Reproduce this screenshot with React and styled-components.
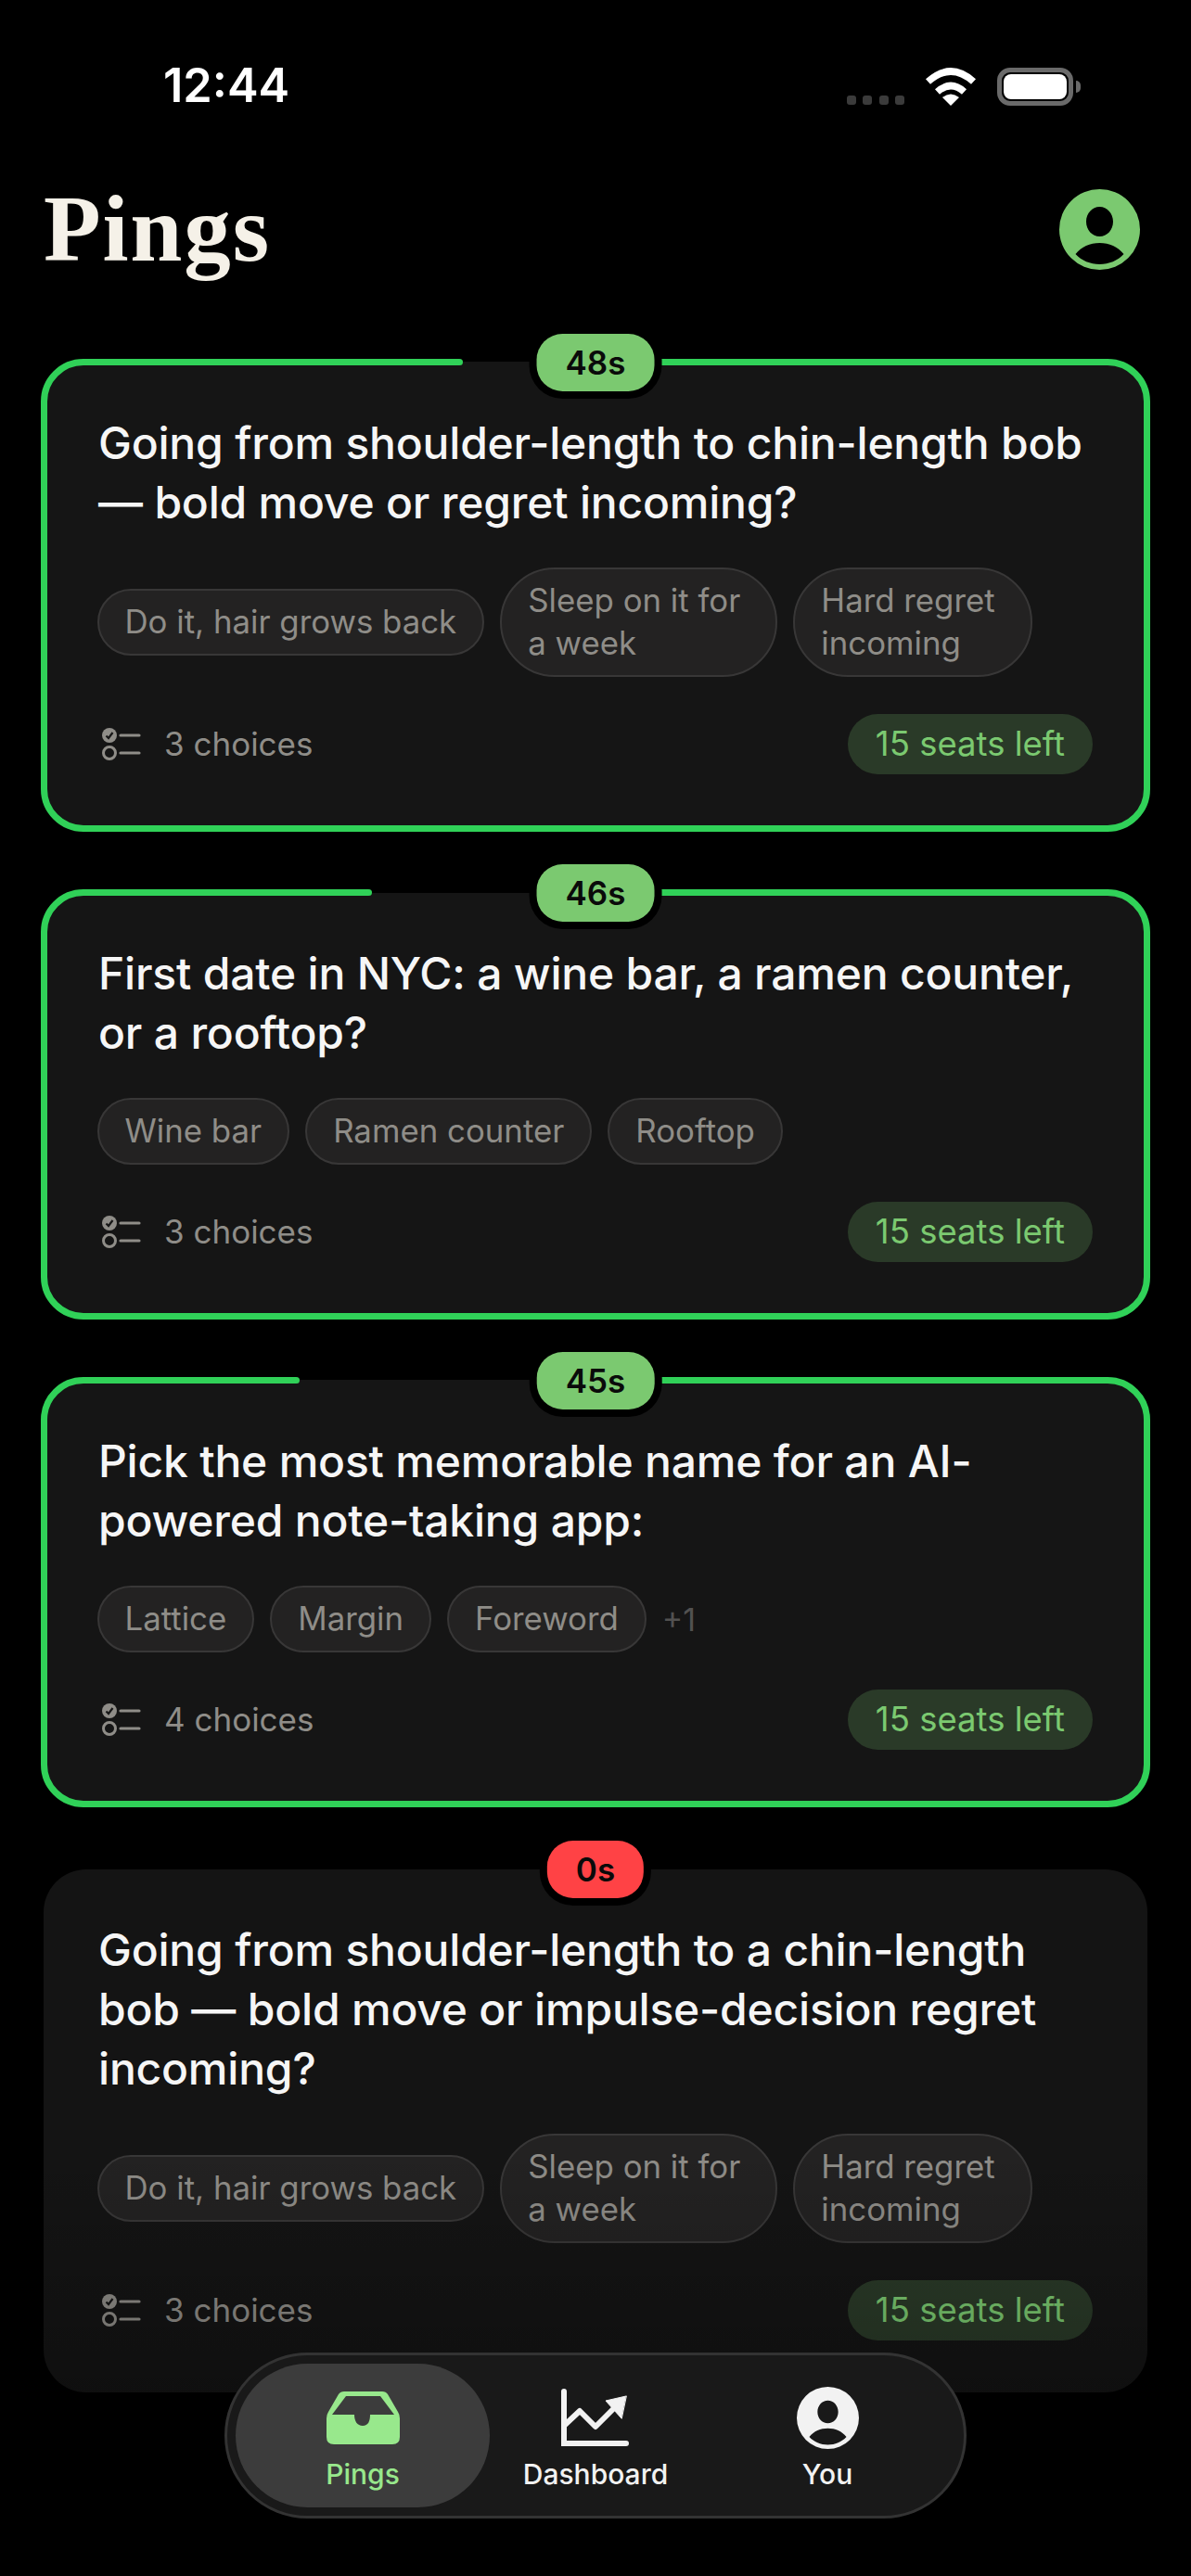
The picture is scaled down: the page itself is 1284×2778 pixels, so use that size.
import React from 'react';
import styled, { createGlobalStyle } from 'styled-components';

const GlobalStyle = createGlobalStyle`
  html, body {
    margin: 0;
    background: #000;
  }
  body {
    font-family: Inter, "Noto Sans", sans-serif;
  }
`;

const pings = [
  {
    id: 1,
    timer: '48s',
    gapLeft: 444,
    title: 'Going from shoulder-length to chin-length bob — bold move or regret incoming?',
    chips: [['Do it, hair grows back'], ['Sleep on it for', 'a week'], ['Hard regret', 'incoming']],
    choices: 3,
  },
  {
    id: 2,
    timer: '46s',
    gapLeft: 346,
    title: 'First date in NYC: a wine bar, a ramen counter, or a rooftop?',
    chips: [['Wine bar'], ['Ramen counter'], ['Rooftop']],
    choices: 3,
  },
  {
    id: 3,
    timer: '45s',
    gapLeft: 268,
    title: 'Pick the most memorable name for an AI-powered note-taking app:',
    chips: [['Lattice'], ['Margin'], ['Foreword']],
    more: '+1',
    choices: 4,
  },
  {
    id: 4,
    timer: '0s',
    expired: true,
    title: 'Going from shoulder-length to a chin-length bob — bold move or impulse-decision regret incoming?',
    chips: [['Do it, hair grows back'], ['Sleep on it for', 'a week'], ['Hard regret', 'incoming']],
    choices: 3,
  },
];

const Page = styled.div`
  position: relative;
  width: 1284px;
  height: 2778px;
  overflow: hidden;
  background: #000;
`;

const StatusBar = styled.div`
  display: flex;
  justify-content: space-between;
  align-items: flex-end;
  height: 41px;
  padding: 73px 119px 0 176px;
`;

const Time = styled.div`
  color: #fff;
  font-size: 50.5px;
  font-weight: 600;
  line-height: 44px;
`;

const StatusIcons = styled.div`
  display: flex;
  align-items: flex-end;
  gap: 22px;
`;

const SignalDots = styled.div`
  display: flex;
  gap: 7.5px;
  padding-bottom: 1px;
`;

const SignalDot = styled.span`
  width: 10px;
  height: 10px;
  border-radius: 3px;
  background: #3b3b3b;
`;

const Battery = styled.div`
  position: relative;
  box-sizing: border-box;
  width: 82px;
  height: 41px;
  margin-right: 8px;
  padding: 2px;
  border: 5px solid #6a6a6a;
  border-radius: 14px;

  &::before {
    content: '';
    display: block;
    height: 100%;
    border-radius: 8px;
    background: #fff;
  }

  &::after {
    content: '';
    position: absolute;
    top: 9px;
    right: -13px;
    width: 5px;
    height: 13px;
    border-radius: 0 5px 5px 0;
    background: #6a6a6a;
  }
`;

const Header = styled.header`
  display: flex;
  justify-content: space-between;
  align-items: center;
  height: 87px;
  padding: 90px 55px 96px 47px;
`;

const PageTitle = styled.h1`
  margin: 0;
  color: #f5f1e8;
  font-family: "Liberation Serif", serif;
  font-size: 101px;
  font-weight: 700;
  letter-spacing: 1.8px;
  line-height: 87px;
`;

const Avatar = styled.div`
  height: 87px;
  color: #7bc970;
`;

const List = styled.main`
  display: flex;
  flex-direction: column;
  gap: 62px;
  padding: 0 44px;
`;

const Card = styled.article`
  position: relative;
  border-radius: 46px;
  ${(p) => p.$expired
    ? 'margin: 5px 3px 0; padding: 55px 59px 56px; background: #141414;'
    : 'border: 7px solid #30d158; padding: 52px 55px 55px; background: #151515;'}
`;

const RingGap = styled.span`
  position: absolute;
  top: -7px;
  left: ${(p) => p.$left}px;
  right: 50%;
  height: 7px;
  background: linear-gradient(#000 50%, #151515 50%);

  &::before {
    content: '';
    position: absolute;
    top: 0;
    left: -3.5px;
    width: 7px;
    height: 7px;
    border-radius: 50%;
    background: #30d158;
  }
`;

const Timer = styled.span`
  position: absolute;
  top: ${(p) => (p.$expired ? -31 : -34)}px;
  left: 50%;
  transform: translateX(-50%);
  padding: 0 31px;
  border-radius: 28px;
  background: ${(p) => (p.$expired ? '#ff4245' : '#7bc970')};
  box-shadow: 0 0 0 8px #000;
  color: #0a0a0a;
  font-size: 35px;
  font-weight: 600;
  line-height: 62px;
`;

const Question = styled.h2`
  margin: 0;
  color: #f6f6f6;
  font-size: 48px;
  font-weight: 500;
  letter-spacing: -0.2px;
  line-height: 64px;
`;

const Chips = styled.div`
  display: flex;
  align-items: center;
  gap: 17px;
  margin: 38px 0 40px -1.5px;
`;

const Chip = styled.span`
  box-sizing: border-box;
  padding: 10px ${(p) => (p.$wrapped ? 38 : 28)}px 12px 28px;
  border: 2px solid #383737;
  border-radius: 60px;
  background: #232222;
  color: #8f8d88;
  font-size: 34.8px;
  line-height: 46px;
  white-space: nowrap;
`;

const MoreCount = styled.span`
  color: #525150;
  font-size: 34px;
`;

const Footer = styled.div`
  display: flex;
  justify-content: space-between;
  align-items: center;
`;

const ChoiceCount = styled.div`
  display: flex;
  align-items: center;
  gap: 25px;
  padding: 0 0 2px 2px;
  color: #8f8d88;
  font-size: 35px;
`;

const Seats = styled.span`
  padding: 0 30px;
  border-radius: 33px;
  background: #2a3a28;
  color: #7bc970;
  font-size: 36.5px;
  line-height: 65px;
`;

const BottomFade = styled.div`
  position: absolute;
  left: 0;
  right: 0;
  bottom: 0;
  height: 460px;
  background: linear-gradient(rgba(0, 0, 0, 0), rgba(0, 0, 0, 0.25) 60%, rgba(0, 0, 0, 0.25));
  pointer-events: none;
`;

const TabBar = styled.nav`
  position: absolute;
  left: 50%;
  bottom: 62px;
  transform: translateX(-50%);
  display: grid;
  grid-template-columns: 274px 228px 272px;
  padding: 9px 11px 9px 9px;
  border: 3px solid #333;
  border-radius: 90px;
  background: #191919;
`;

const Tab = styled.div`
  display: flex;
  flex-direction: column;
  align-items: center;
  height: 155px;
  box-sizing: border-box;
  padding-top: 24px;
  border-radius: 78px;
  background: ${(p) => (p.$active ? '#3c3c3c' : 'transparent')};
  color: ${(p) => (p.$active ? '#98e88c' : '#f2f2f2')};
`;

const TabIcon = styled.div`
  display: flex;
  justify-content: center;
  align-items: center;
  height: 68px;
  margin-bottom: 9px;
`;

const TabLabel = styled.span`
  font-size: 30px;
  font-weight: 500;
  line-height: 36px;
`;

const WifiIcon = () => (
  <svg width="56" height="41" viewBox="0 0 56 41" fill="none">
    <path d="M3.5 15 Q28 -7 52.5 15" stroke="#fff" strokeWidth="7.5" />
    <path d="M13.5 26 Q28 13 42.5 26" stroke="#fff" strokeWidth="7.5" />
    <path d="M28 41 L19 32 Q28 25 37 32 Z" fill="#fff" />
  </svg>
);

const PersonIcon = ({ size }) => (
  <svg width={size} height={size} viewBox="0 0 87 87" fill="currentColor">
    <path
      fillRule="evenodd"
      d="M43.5 0a43.5 43.5 0 1 0 0 87a43.5 43.5 0 1 0 0-87Z
         M43.5 19c-8 0-14.5 7-14.5 16s6.5 16 14.5 16s14.5-7 14.5-16s-6.5-16-14.5-16Z
         M17.5 70C24 62 33 58 43.5 58S63 62 69.5 70C63 77 53.5 81 43.5 81S24 77 17.5 70Z"
    />
  </svg>
);

const ChoicesIcon = () => (
  <svg width="44" height="38" viewBox="0 0 44 38" fill="none">
    <circle cx="10" cy="10" r="8" fill="#8f8d88" />
    <path d="M6.5 10.5 L9 13 L13.5 7" stroke="#171717" strokeWidth="2.2" />
    <circle cx="10" cy="29" r="6.5" stroke="#8f8d88" strokeWidth="3" />
    <path d="M22 10 H42 M22 29 H42" stroke="#8f8d88" strokeWidth="3.2" strokeLinecap="round" />
  </svg>
);

const InboxIcon = () => (
  <svg width="79" height="57" viewBox="0 0 79 57" fill="currentColor">
    <path
      fillRule="evenodd"
      d="M19 0H60Q64 0 66 3L77 22Q79 25 79 29V49Q79 57 71 57H8Q0 57 0 49V29Q0 25 2 22L13 3Q15 0 19 0Z
         M21 5L6 25H30C30 32 33 37 39 37C45 37 47 32 47 25H73L58 5Z"
    />
  </svg>
);

const ChartIcon = () => (
  <svg width="80" height="72" viewBox="0 0 80 72" fill="none" stroke="currentColor" strokeWidth="6" strokeLinecap="round">
    <path d="M6 8V64H73" />
    <path d="M7 44L23 29L40 46L60 26" strokeLinejoin="round" />
    <path d="M73 13L51 18L68 37Z" fill="currentColor" strokeWidth="1" strokeLinejoin="round" />
  </svg>
);

const PingCard = ({ ping }) => (
  <Card $expired={ping.expired}>
    {!ping.expired && <RingGap $left={ping.gapLeft} />}
    <Timer $expired={ping.expired}>{ping.timer}</Timer>
    <Question>{ping.title}</Question>
    <Chips>
      {ping.chips.map((lines) => (
        <Chip key={lines[0]} $wrapped={lines.length > 1}>
          {lines.map((line, i) => (
            <React.Fragment key={line}>
              {i > 0 && <br />}
              {line}
            </React.Fragment>
          ))}
        </Chip>
      ))}
      {ping.more && <MoreCount>{ping.more}</MoreCount>}
    </Chips>
    <Footer>
      <ChoiceCount>
        <ChoicesIcon />
        {ping.choices} choices
      </ChoiceCount>
      <Seats>15 seats left</Seats>
    </Footer>
  </Card>
);

export default function App() {
  return (
    <Page>
      <GlobalStyle />
      <StatusBar>
        <Time>12:44</Time>
        <StatusIcons>
          <SignalDots>
            <SignalDot />
            <SignalDot />
            <SignalDot />
            <SignalDot />
          </SignalDots>
          <WifiIcon />
          <Battery />
        </StatusIcons>
      </StatusBar>
      <Header>
        <PageTitle>Pings</PageTitle>
        <Avatar>
          <PersonIcon size={87} />
        </Avatar>
      </Header>
      <List>
        {pings.map((ping) => (
          <PingCard key={ping.id} ping={ping} />
        ))}
      </List>
      <BottomFade />
      <TabBar>
        <Tab $active>
          <TabIcon><InboxIcon /></TabIcon>
          <TabLabel>Pings</TabLabel>
        </Tab>
        <Tab>
          <TabIcon><ChartIcon /></TabIcon>
          <TabLabel>Dashboard</TabLabel>
        </Tab>
        <Tab>
          <TabIcon><PersonIcon size={67} /></TabIcon>
          <TabLabel>You</TabLabel>
        </Tab>
      </TabBar>
    </Page>
  );
}
